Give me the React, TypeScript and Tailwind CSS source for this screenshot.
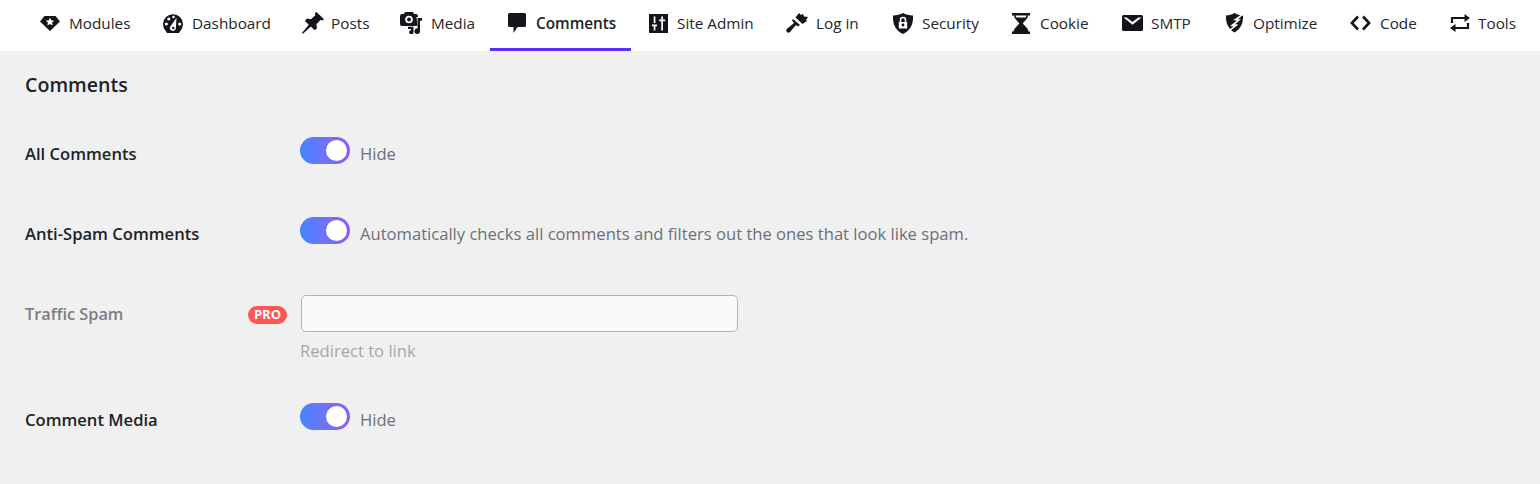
import type { ReactNode } from "react";

const ink = "#16141a";

function Gem() {
  return (
    <svg viewBox="0 0 20 15" className="h-[15px] w-5">
      <path fill={ink} d="M4.500 0h11L20 5.500 10 15 0 5.500z" />
      <path fill="#fff" d="M10 1.800l1.300 2.500 2.900.4-2.100 1.900.5 2.800-2.600-1.300-2.600 1.300.5-2.800-2.100-1.900 2.900-.4z" />
    </svg>
  );
}

function Gauge() {
  return (
    <svg viewBox="0 0 20 19" className="h-[19px] w-5">
      <path fill={ink} d="M2.700 17A10 10 0 1 1 17.300 17l-1.300 2H4z" />
      <circle cx="3.300" cy="10" r="1.600" fill="#fff" />
      <circle cx="5.800" cy="5" r="1.600" fill="#fff" />
      <circle cx="10.500" cy="3" r="1.300" fill="#fff" />
      <circle cx="16.700" cy="10" r="1.600" fill="#fff" />
      <path fill="#fff" d="M13.500 3.800l-.6 10a3 3 0 1 1-5.400-1.600z" />
      <circle cx="10.300" cy="14" r="1.200" fill={ink} />
    </svg>
  );
}

function Pin() {
  return (
    <svg viewBox="0 0 22 22" className="h-[22px] w-[22px]">
      <path fill={ink} d="M14.500 0L22 7.200l-1.600 1.300-2-.6-4 4.400.6 4-2.300 2-3.800-3.900L1 21.800l-1-.8 6.800-8.300-3.900-3.800 2-2.300 4 .6 4.400-4-.5-2z" />
    </svg>
  );
}

function MediaIcon() {
  return (
    <svg viewBox="0 0 22 22" className="h-[22px] w-[22px]">
      <path fill={ink} d="M2 2h2l1-2h8l1 2h2a2 2 0 0 1 2 2v8a2 2 0 0 1-2 2H2a2 2 0 0 1-2-2V4a2 2 0 0 1 2-2z" />
      <circle cx="9" cy="7.500" r="3.800" fill="#fff" />
      <circle cx="9" cy="7.500" r="2" fill={ink} />
      <path fill="#fff" d="M16.500 5h5.500v5h-3v6h-12v-2h10.500z" />
      <path fill={ink} d="M17.500 6H22v2.800h-2v10.400a2.800 2.800 0 1 1-2.500-2.800z" />
      <path fill={ink} d="M8 14.800h5.500V20.200a2.200 2.200 0 1 1-2.500-2.200v-1H8z" />
    </svg>
  );
}

function Bubble() {
  return (
    <svg viewBox="0 0 18 20" className="h-5 w-[18px]">
      <path fill={ink} d="M1.500 0h15A1.500 1.500 0 0 1 18 1.500v11a1.500 1.500 0 0 1-1.500 1.500H9.500L5.500 20v-6h-4A1.500 1.500 0 0 1 0 12.500v-11A1.500 1.500 0 0 1 1.500 0z" />
    </svg>
  );
}

function Sliders() {
  return (
    <svg viewBox="0 0 19 19" className="h-[19px] w-[19px]">
      <path fill={ink} d="M0 0h19v19H0z" />
      <path fill="#fff" d="M4.700 2.500h1.700V9H4.700zM3 10.500h5.100v1.700H6.400V16.500H4.700v-4.300H3zM12.300 2.500H14v3h2.200v1.700H14v9.300h-1.700V7.200h-2.200V5.500h2.200z" />
    </svg>
  );
}

function Brush() {
  return (
    <svg viewBox="0 0 22 20" className="h-5 w-[22px]">
      <path fill={ink} d="M9.500 4.500L13 0l2 2 2-1 1 2.500 4 .5-2 3 1 1-4.500 3z" />
      <path fill={ink} d="M7 6l7 6-2 1.500-2-1.500-6 7a2.200 2.200 0 0 1-3.200-3L8 10 6 7.500z" />
    </svg>
  );
}

function Shield() {
  return (
    <svg viewBox="0 0 20 21" className="h-[21px] w-5">
      <path fill={ink} d="M10 0c2.500 1.500 6 2.500 10 2.500 .5 8-2 14.500-10 18.500C2 17-.5 10.500 0 2.500 4 2.500 7.500 1.500 10 0z" />
      <path fill="none" stroke="#fff" strokeWidth="1.500" d="M7.500 9.500V7a2.500 2.500 0 0 1 5 0v2.500" />
      <path fill="#fff" d="M5.800 9h8.400v6.500H5.800z" />
      <circle cx="10" cy="12" r="1.400" fill={ink} />
    </svg>
  );
}

function Hourglass() {
  return (
    <svg viewBox="0 0 18 21" className="h-[21px] w-[18px]">
      <path fill={ink} d="M0 0h18v2.500h-2c-.3 3.500-3.800 5.800-5.200 8 1.400 2.200 5.500 4.500 5.600 8H18V21H0v-2.500h1.600c.1-3.500 4.200-5.800 5.600-8-1.400-2.200-4.900-4.500-5.200-8H0z" />
      <path fill="#fff" d="M3.500 2.500h11l-.8 2H4.300z" />
    </svg>
  );
}

function Mail() {
  return (
    <svg viewBox="0 0 21 16" className="h-4 w-[21px]">
      <path fill={ink} d="M1.500 0h18A1.500 1.500 0 0 1 21 1.500v13a1.500 1.500 0 0 1-1.500 1.500h-18A1.500 1.500 0 0 1 0 14.500v-13A1.500 1.500 0 0 1 1.500 0z" />
      <path fill="#fff" d="M1.500 2.500h3.200l5.800 4.500 5.800-4.500h3.200l-9 7.300z" />
    </svg>
  );
}

function Bolt() {
  return (
    <svg viewBox="0 0 20 22" className="h-[22px] w-5">
      <path fill={ink} d="M9.500 1c2.500 1.300 5.300 2.300 8.500 2.500.4 6.800-1.900 13.300-8.500 17C3 16.800.6 10.300 1 3.500 4.200 3.300 7 2.300 9.500 1z" />
      <path fill="#fff" d="M18.500 1L8 8.200l4 .3-7 5.500 3.500.2L.5 21l.7.7L13.500 12.500 10 12.300l6-5-3-.1L19.200 1.700z" />
    </svg>
  );
}

function CodeIcon() {
  return (
    <svg viewBox="0 0 21 16" className="h-4 w-[21px]">
      <path fill="none" stroke={ink} strokeWidth="2.600" d="M8 1.500L1.900 8 8 14.500M13 1.500L19.100 8 13 14.500" />
    </svg>
  );
}

function Repeat() {
  return (
    <svg viewBox="0 0 20 18" className="h-[18px] w-5">
      <path fill="none" stroke={ink} strokeWidth="2.200" d="M2 9V4h13M18 9v5H5" />
      <path fill={ink} d="M14.500 0L20 4l-5.500 4zM5.500 10L0 14l5.500 4z" />
    </svg>
  );
}

const navItems: { label: string; icon: ReactNode; width: string; gap: string; active?: boolean }[] = [
  { label: "Modules", icon: <Gem />, width: "w-[123px]", gap: "gap-[9px]" },
  { label: "Dashboard", icon: <Gauge />, width: "w-[139px]", gap: "gap-[9px]" },
  { label: "Posts", icon: <Pin />, width: "w-[98px]", gap: "gap-[7px]" },
  { label: "Media", icon: <MediaIcon />, width: "w-[108px]", gap: "gap-[9px]" },
  { label: "Comments", icon: <Bubble />, width: "w-[141px]", gap: "gap-2.5", active: true },
  { label: "Site Admin", icon: <Sliders />, width: "w-[137px]", gap: "gap-[9px]" },
  { label: "Log in", icon: <Brush />, width: "w-[107px]", gap: "gap-2" },
  { label: "Security", icon: <Shield />, width: "w-[119px]", gap: "gap-[9px]" },
  { label: "Cookie", icon: <Hourglass />, width: "w-[110px]", gap: "gap-2.5" },
  { label: "SMTP", icon: <Mail />, width: "w-[103px]", gap: "gap-2" },
  { label: "Optimize", icon: <Bolt />, width: "w-[125px]", gap: "gap-2" },
  { label: "Code", icon: <CodeIcon />, width: "w-[100px]", gap: "gap-[9px]" },
  { label: "Tools", icon: <Repeat />, width: "w-[98px]", gap: "gap-2" },
];

function Toggle() {
  return (
    <span className="flex h-[27px] w-[50px] shrink-0 items-center justify-end rounded-full bg-gradient-to-r from-[#4285ff] to-[#8b5cf6] pr-[3px]">
      <span className="h-[21px] w-[21px] rounded-full bg-white" />
    </span>
  );
}

function ToggleRow({ label, text, className }: { label: string; text: string; className: string }) {
  return (
    <div className={`flex ${className}`}>
      <div className="w-[275px] pt-[6px] text-[16.6px] leading-[22px] font-semibold text-[#1d2327]">{label}</div>
      <div className="flex items-start gap-[10px]">
        <Toggle />
        <span className="pt-[6px] text-[16.6px] leading-[22px] text-[#6b7078]">{text}</span>
      </div>
    </div>
  );
}

export default function App() {
  return (
    <div className="h-[484px] w-[1540px] overflow-hidden bg-[#f0f0f1] font-['Open_Sans','Noto_Sans',sans-serif]">
      <nav className="flex h-[51px] bg-white pl-[22px]">
        {navItems.map((item) => (
          <div
            key={item.label}
            className={`flex shrink-0 items-center border-b-[3px] pb-[2px] pl-[18px] text-[15.3px] ${item.width} ${item.gap} ${
              item.active ? "border-[#5b2df5] font-semibold text-[#1d2327]" : "border-transparent text-[#23272c]"
            }`}
          >
            {item.icon}
            <span>{item.label}</span>
          </div>
        ))}
      </nav>

      <main className="px-[25px]">
        <h1 className="pt-[21px] text-[19.6px] leading-[26px] font-semibold text-[#1d2327]">Comments</h1>

        <ToggleRow label="All Comments" text="Hide" className="mt-[39px]" />
        <ToggleRow
          label="Anti-Spam Comments"
          text="Automatically checks all comments and filters out the ones that look like spam."
          className="mt-[52px]"
        />

        <div className="mt-[50px] flex">
          <div className="flex w-[276px] items-start justify-between pr-[14px]">
            <span className="pt-[8px] text-[16.3px] leading-[22px] font-semibold text-[#7b7f85]">Traffic Spam</span>
            <span className="mt-[11px] flex h-[18px] w-[39px] items-center justify-center rounded-full bg-[#ff5555] text-[13px] font-bold text-white">
              PRO
            </span>
          </div>
          <div>
            <div className="h-[37px] w-[437px] rounded-[5px] border border-[#b2b2b2] bg-[#fafafa]" />
            <div className="-ml-px mt-[8px] text-[16.6px] leading-[22px] text-[#a5a7aa]">Redirect to link</div>
          </div>
        </div>

        <ToggleRow label="Comment Media" text="Hide" className="mt-[41px]" />
      </main>
    </div>
  );
}
